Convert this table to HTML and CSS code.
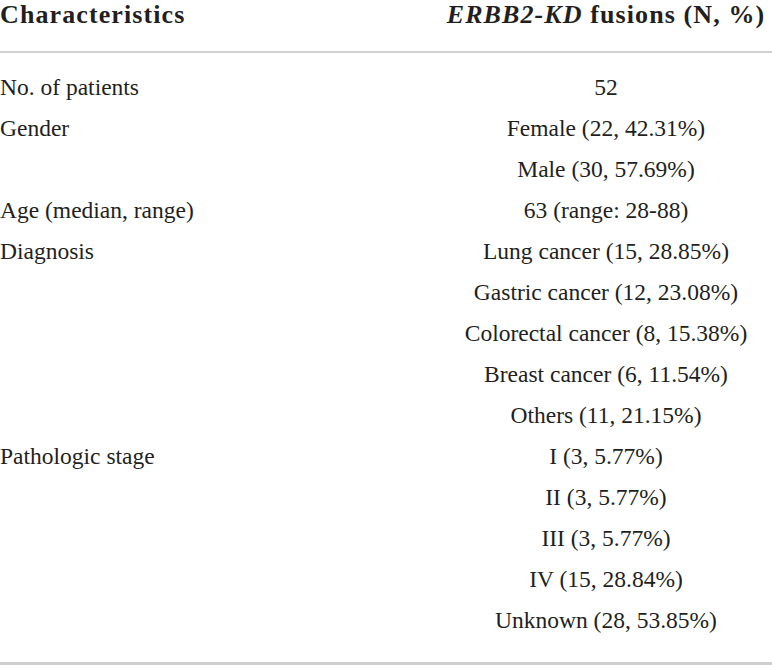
FILE: index.html
```html
<!DOCTYPE html>
<html lang="en">
<head>
    <meta charset="UTF-8">
    <meta name="viewport" content="width=device-width, initial-scale=1.0">
    <title>ERBB2-KD fusions - patient characteristics</title>
    <link rel="stylesheet" href="styles.css">
</head>
<body>
    <table class="characteristics">
        <thead>
            <tr>
                <th class="label">Characteristics</th>
                <th class="value"><em>ERBB2-KD</em> fusions (N, %)</th>
            </tr>
        </thead>
        <tbody>
            <tr><td class="label">No. of patients</td><td class="value">52</td></tr>
            <tr><td class="label">Gender</td><td class="value">Female (22, 42.31%)</td></tr>
            <tr><td class="label"></td><td class="value">Male (30, 57.69%)</td></tr>
            <tr><td class="label">Age (median, range)</td><td class="value">63 (range: 28-88)</td></tr>
            <tr><td class="label">Diagnosis</td><td class="value">Lung cancer (15, 28.85%)</td></tr>
            <tr><td class="label"></td><td class="value">Gastric cancer (12, 23.08%)</td></tr>
            <tr><td class="label"></td><td class="value">Colorectal cancer (8, 15.38%)</td></tr>
            <tr><td class="label"></td><td class="value">Breast cancer (6, 11.54%)</td></tr>
            <tr><td class="label"></td><td class="value">Others (11, 21.15%)</td></tr>
            <tr><td class="label">Pathologic stage</td><td class="value">I (3, 5.77%)</td></tr>
            <tr><td class="label"></td><td class="value">II (3, 5.77%)</td></tr>
            <tr><td class="label"></td><td class="value">III (3, 5.77%)</td></tr>
            <tr><td class="label"></td><td class="value">IV (15, 28.84%)</td></tr>
            <tr><td class="label"></td><td class="value">Unknown (28, 53.85%)</td></tr>
        </tbody>
    </table>
</body>
</html>
```

FILE: styles.css
```css
body {
    margin: 0;
    background-color: #fff;
    color: #231f20;
    font-family: 'Liberation Serif', 'Times New Roman', serif;
}

.characteristics {
    width: 772px;
    border-collapse: collapse;
    border-bottom: 3px solid #cfcfcf;
}

.characteristics th {
    height: 51px;
    padding: 0;
    vertical-align: top;
    font-size: 26px;
    line-height: 29px;
    font-weight: bold;
    letter-spacing: 1.1px;
    border-bottom: 2px solid #d2d2d2;
}

.characteristics th em {
    font-style: italic;
}

.characteristics td {
    padding: 0;
    font-size: 23.5px;
    line-height: 41px;
    white-space: nowrap;
}

.characteristics tbody tr:first-child td {
    padding-top: 14px;
}

.characteristics tbody tr:last-child td {
    padding-bottom: 21px;
}

.label {
    text-align: left;
}

.value {
    width: 332px;
    text-align: center;
}
```
